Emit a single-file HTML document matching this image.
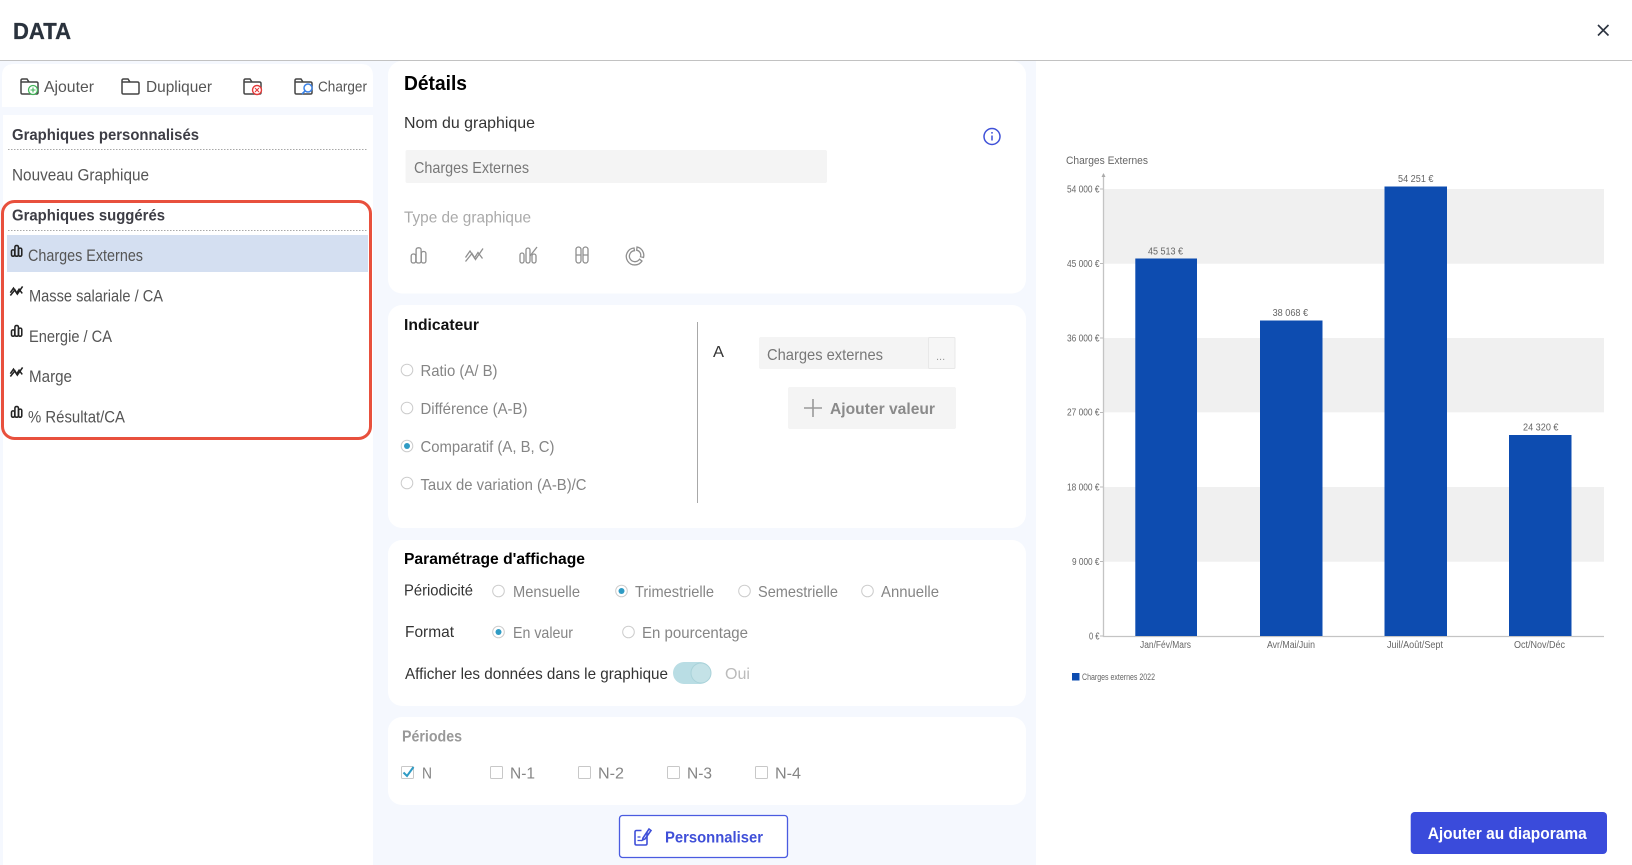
<!DOCTYPE html>
<html lang="fr"><head><meta charset="utf-8"><title>DATA</title>
<style>
html,body{margin:0;padding:0;width:1632px;height:865px;overflow:hidden;background:#fff}
svg{display:block;filter:blur(.3px)}
text{font-family:"Liberation Sans",sans-serif;font-size:16px}
.b{font-weight:700}
.g{fill:#858585}
.c text,text.c{fill:#666;font-size:10px}
</style></head><body>
<svg width="1632" height="865" viewBox="0 0 1632 865" xmlns="http://www.w3.org/2000/svg">
<defs>
<g id="bars" fill="none"><rect x=".7" y="7" width="4.600" height="9" rx="2"/><rect x="5.600" y=".8" width="5" height="15.200" rx="2"/><rect x="10.800" y="4.500" width="4.600" height="11.500" rx="2"/></g>
<g id="lines" fill="none"><path d="M.5 15 7 7l3.500 6L18 2"/><path d="M.5 11 5 4.500l4.500 7L13 6l4.500 6"/></g>
<g id="folder" fill="none" stroke-width="1.500"><path d="M1 4V2.500Q1 1 2.500 1H7l2 3h7.500Q18 4 18 5.500V14.500Q18 16 16.500 16H2.500Q1 16 1 14.500V4H9"/></g>
</defs>

<rect width="1632" height="865" fill="#f5f8fe"/>
<rect width="1632" height="60" fill="#fff"/>
<rect y="60" width="1632" height="1" fill="#c2c2c2"/>
<text class="b" x="13" y="39" style="font-size:23px" fill="#2a323d" stroke="#2a323d" stroke-width=".3" textLength="58" lengthAdjust="spacingAndGlyphs">DATA</text>
<path d="M1598 25l10.500 10.500M1608.500 25L1598 35.500" stroke="#2c3440" stroke-width="1.600" fill="none"/>

<!-- Left column -->
<path d="M2 107V76Q2 64 14 64H361Q373 64 373 76V107Z" fill="#fff"/>
<rect x="3" y="115" width="370" height="750" fill="#fff"/>

<use href="#folder" x="20" y="78" stroke="#444"/>
<circle cx="33" cy="90" r="4.500" fill="#fff" stroke="#43b55a" stroke-width="1.300"/><path d="M30.500 90h5M33 87.500v5" stroke="#43b55a" stroke-width="1.100"/>
<text x="44" y="92" fill="#555" textLength="50" lengthAdjust="spacingAndGlyphs">Ajouter</text>
<use href="#folder" x="121" y="78" stroke="#444"/>
<text x="146" y="92" fill="#555" textLength="66" lengthAdjust="spacingAndGlyphs">Dupliquer</text>
<use href="#folder" x="243" y="78" stroke="#444"/>
<circle cx="257" cy="90" r="4.500" fill="#fff" stroke="#e63a3a" stroke-width="1.400"/><path d="M255 88l4 4M259 88l-4 4" stroke="#e63a3a" stroke-width="1.100"/>
<use href="#folder" x="294" y="78" stroke="#444"/>
<circle cx="308" cy="88" r="4" fill="#fff" stroke="#3b82e6" stroke-width="1.500"/><path d="M305 91l-3 3" stroke="#3b82e6" stroke-width="1.600"/>
<text x="318" y="91.500" fill="#555" style="font-size:15px" textLength="49" lengthAdjust="spacingAndGlyphs">Charger</text>

<text class="b" x="12" y="140" fill="#3d3d45" textLength="187" lengthAdjust="spacingAndGlyphs">Graphiques personnalisés</text>
<line x1="8" y1="149.500" x2="367" y2="149.500" stroke="#a8a8a8" stroke-dasharray="1.500 1.500"/>
<text x="12" y="180.500" fill="#555" style="font-size:16.500px" textLength="137" lengthAdjust="spacingAndGlyphs">Nouveau Graphique</text>

<text class="b" x="12" y="220.700" fill="#3d3d45" textLength="153" lengthAdjust="spacingAndGlyphs">Graphiques suggérés</text>
<line x1="8" y1="230.500" x2="367" y2="230.500" stroke="#a8a8a8" stroke-dasharray="1.500 1.500"/>
<rect x="7" y="235" width="361" height="37" fill="#d4dff1"/>
<g stroke="#222" stroke-width="2.200">
<use href="#bars" transform="translate(11 245) scale(.7)"/>
<use href="#lines" transform="translate(10 285) scale(.7)"/>
<use href="#bars" transform="translate(11 325) scale(.7)"/>
<use href="#lines" transform="translate(10 366) scale(.7)"/>
<use href="#bars" transform="translate(11 406) scale(.7)"/>
</g>
<text x="28" y="261" fill="#555" style="font-size:16.500px" textLength="115" lengthAdjust="spacingAndGlyphs">Charges Externes</text>
<text x="29" y="301.600" fill="#555" style="font-size:16.500px" textLength="134" lengthAdjust="spacingAndGlyphs">Masse salariale / CA</text>
<text x="29" y="341.800" fill="#555" style="font-size:16.500px" textLength="83" lengthAdjust="spacingAndGlyphs">Energie / CA</text>
<text x="29" y="382" fill="#555" style="font-size:16.500px" textLength="43" lengthAdjust="spacingAndGlyphs">Marge</text>
<text x="28" y="422.700" fill="#555" style="font-size:16.500px" textLength="97" lengthAdjust="spacingAndGlyphs">% Résultat/CA</text>
<rect x="2.500" y="201.500" width="368" height="237" rx="12" fill="none" stroke="#e8503d" stroke-width="3"/>

<!-- Details -->
<rect x="388" y="61" width="638" height="232.500" rx="14" fill="#fff"/>
<text class="b" x="404" y="90" fill="#000" style="font-size:20px" textLength="63" lengthAdjust="spacingAndGlyphs">Détails</text>
<text x="404" y="128" fill="#333" textLength="131" lengthAdjust="spacingAndGlyphs">Nom du graphique</text>
<circle cx="992" cy="136.500" r="8" fill="none" stroke="#3f51d8" stroke-width="1.500"/><path d="M992 135.500v5M992 132v1.600" stroke="#3f51d8" stroke-width="1.500"/>
<rect x="405.500" y="150" width="421.500" height="33" rx="2" fill="#f4f4f4"/>
<text x="414" y="173" fill="#777" textLength="115" lengthAdjust="spacingAndGlyphs">Charges Externes</text>
<text x="404" y="222.500" fill="#aaa" textLength="127" lengthAdjust="spacingAndGlyphs">Type de graphique</text>
<g stroke="#8f8f8f" stroke-width="1.300">
<use href="#bars" x="410.500" y="247"/>
<use href="#lines" x="465" y="246.500"/>
</g>
<g fill="none" stroke="#8f8f8f" stroke-width="1.300"><rect x="520" y="253" width="4" height="10" rx="2"/><rect x="526" y="248" width="4" height="15" rx="2"/><rect x="532" y="254" width="4" height="9" rx="2"/><path d="M530 256l7-9"/>
<rect x="576" y="247" width="5" height="16" rx="2.500"/><rect x="583" y="247" width="5" height="16" rx="2.500"/><path d="M576 255h5M583 255h5"/>
<path d="M634 248a8.500 8.500 0 1 0 8 13l-2.500-1.800a5.500 5.500 0 1 1-5-8.500z"/><path d="M637 247a8.500 8.500 0 0 1 6.500 10.500l-3-.8a5 5 0 0 0-3.800-6.500z"/></g>

<!-- Indicateur -->
<rect x="388" y="305" width="638" height="223" rx="14" fill="#fff"/>
<text class="b" x="404" y="330" fill="#111" textLength="75" lengthAdjust="spacingAndGlyphs">Indicateur</text>
<g fill="#fff" stroke="#ccc"><circle cx="407" cy="370" r="5.800"/><circle cx="407" cy="408" r="5.800"/><circle cx="407" cy="446" r="5.800"/><circle cx="407" cy="483" r="5.800"/></g>
<circle cx="407" cy="446" r="3" fill="#2f9bc4"/>
<text class="g" x="420.500" y="376.200" textLength="77" lengthAdjust="spacingAndGlyphs">Ratio (A/ B)</text>
<text class="g" x="420.500" y="414" textLength="107" lengthAdjust="spacingAndGlyphs">Différence (A-B)</text>
<text class="g" x="420.500" y="452" textLength="134" lengthAdjust="spacingAndGlyphs">Comparatif (A, B, C)</text>
<text class="g" x="420.500" y="490" textLength="166" lengthAdjust="spacingAndGlyphs">Taux de variation (A-B)/C</text>
<rect x="697" y="322" width="1" height="181" fill="#a8a8a8"/>
<text x="713" y="357" fill="#333" textLength="11" lengthAdjust="spacingAndGlyphs">A</text>
<rect x="759" y="337" width="196" height="32" rx="2" fill="#f4f4f4"/>
<rect x="928.500" y="337.500" width="26.500" height="31" rx="1" fill="#f6f6f6" stroke="#e8e8e8"/>
<text x="936" y="360" fill="#999" style="font-size:11px">...</text>
<text x="767" y="360" fill="#777" textLength="116" lengthAdjust="spacingAndGlyphs">Charges externes</text>
<rect x="788" y="387" width="168" height="42" rx="2" fill="#f4f4f4"/>
<path d="M813 399v18M804 408h18" stroke="#999" stroke-width="1.600"/>
<text class="b" x="830" y="414" fill="#8a8a8a" textLength="105" lengthAdjust="spacingAndGlyphs">Ajouter valeur</text>

<!-- Parametrage -->
<rect x="388" y="540" width="638" height="166" rx="14" fill="#fff"/>
<text class="b" x="404" y="564" fill="#000" textLength="181" lengthAdjust="spacingAndGlyphs">Paramétrage d'affichage</text>
<text x="404" y="595.500" fill="#333" textLength="69" lengthAdjust="spacingAndGlyphs">Périodicité</text>
<g fill="#fff" stroke="#ccc"><circle cx="498.500" cy="591" r="5.800"/><circle cx="621.500" cy="591" r="5.800"/><circle cx="744.500" cy="591" r="5.800"/><circle cx="867.500" cy="591" r="5.800"/><circle cx="498.500" cy="632" r="5.800"/><circle cx="628.500" cy="632" r="5.800"/></g>
<circle cx="621.500" cy="591" r="3" fill="#2f9bc4"/><circle cx="498.500" cy="632" r="3" fill="#2f9bc4"/>
<text class="g" x="513" y="597" textLength="67" lengthAdjust="spacingAndGlyphs">Mensuelle</text>
<text class="g" x="635" y="597" textLength="79" lengthAdjust="spacingAndGlyphs">Trimestrielle</text>
<text class="g" x="758" y="597" textLength="80" lengthAdjust="spacingAndGlyphs">Semestrielle</text>
<text class="g" x="881" y="597" textLength="58" lengthAdjust="spacingAndGlyphs">Annuelle</text>
<text x="405" y="637" fill="#333" textLength="49" lengthAdjust="spacingAndGlyphs">Format</text>
<text class="g" x="513" y="638" textLength="60" lengthAdjust="spacingAndGlyphs">En valeur</text>
<text class="g" x="642" y="638" textLength="106" lengthAdjust="spacingAndGlyphs">En pourcentage</text>
<text x="405" y="679" fill="#333" textLength="263" lengthAdjust="spacingAndGlyphs">Afficher les données dans le graphique</text>
<rect x="673" y="662" width="38" height="22" rx="11" fill="#b9dde4"/>
<circle cx="701" cy="673" r="10" fill="#c4e2e7" stroke="#a9d2d9"/>
<text x="725" y="679" fill="#bbb" textLength="25" lengthAdjust="spacingAndGlyphs">Oui</text>

<!-- Periodes -->
<rect x="388" y="717" width="638" height="88" rx="14" fill="#fff"/>
<text class="b" x="402" y="741.500" fill="#999" textLength="60" lengthAdjust="spacingAndGlyphs">Périodes</text>
<g fill="#fff" stroke="#c8c8c8"><rect x="401.500" y="766.500" width="12" height="12" rx="1"/><rect x="490.500" y="766.500" width="12" height="12" rx="1"/><rect x="578.500" y="766.500" width="12" height="12" rx="1"/><rect x="667.500" y="766.500" width="12" height="12" rx="1"/><rect x="755.500" y="766.500" width="12" height="12" rx="1"/></g>
<path d="M403.500 772.500l3.500 3.500 6.500-9" fill="none" stroke="#2f9bc4" stroke-width="2"/>
<text class="g" x="422" y="778.500" textLength="10" lengthAdjust="spacingAndGlyphs">N</text>
<text class="g" x="510" y="778.500" textLength="25" lengthAdjust="spacingAndGlyphs">N-1</text>
<text class="g" x="598" y="778.500" textLength="26" lengthAdjust="spacingAndGlyphs">N-2</text>
<text class="g" x="687" y="778.500" textLength="25" lengthAdjust="spacingAndGlyphs">N-3</text>
<text class="g" x="775" y="778.500" textLength="26" lengthAdjust="spacingAndGlyphs">N-4</text>

<rect x="619.500" y="815.500" width="168" height="42" rx="3" fill="#fff" stroke="#4a5be0" stroke-width="1.300"/>
<g fill="none" stroke="#3f4fd8" stroke-width="1.600"><path d="M647 832v11.500q0 1.500-1.500 1.500h-9q-1.500 0-1.500-1.500V832q0-1.500 1.500-1.500h5"/><path d="M643 838l6-9 2 1.500-6 8.500-2.500 1z"/><path d="M637.500 837h3M637.500 840.500h5" stroke-width="1.200"/></g>
<text class="b" x="665" y="842.500" fill="#3f4fd8" textLength="98" lengthAdjust="spacingAndGlyphs">Personnaliser</text>

<!-- Right panel -->
<rect x="1036" y="61" width="596" height="804" fill="#fff"/>
<text class="c" x="1066" y="164" style="font-size:11px" textLength="82" lengthAdjust="spacingAndGlyphs">Charges Externes</text>
<g fill="#f0f0f0"><rect x="1103" y="189" width="501" height="74.700"/><rect x="1103" y="338" width="501" height="74.300"/><rect x="1103" y="487" width="501" height="74.700"/></g>
<path d="M1103.500 174V636.500H1604" fill="none" stroke="#c4c4c4" stroke-width="1.300"/>
<path d="M1101.500 177l2-4 2 4z" fill="#aaa"/>
<g stroke="#bbb"><path d="M1100 189h3M1100 263.500h3M1100 338h3M1100 412.500h3M1100 487h3M1100 561.500h3M1100 636h3"/></g>
<g fill="#0d4cb0"><rect x="1135.300" y="258.500" width="61.700" height="377.500"/><rect x="1260" y="320.500" width="62.500" height="315.500"/><rect x="1384.500" y="186.500" width="62.500" height="449.500"/><rect x="1509" y="435" width="62.500" height="201"/></g>
<g class="c">
<text x="1067" y="192.300" textLength="32.500" lengthAdjust="spacingAndGlyphs">54 000 €</text>
<text x="1067" y="267" textLength="32.500" lengthAdjust="spacingAndGlyphs">45 000 €</text>
<text x="1067" y="341.300" textLength="32.500" lengthAdjust="spacingAndGlyphs">36 000 €</text>
<text x="1067" y="415.700" textLength="32.500" lengthAdjust="spacingAndGlyphs">27 000 €</text>
<text x="1067" y="490.300" textLength="32.500" lengthAdjust="spacingAndGlyphs">18 000 €</text>
<text x="1072" y="565" textLength="27.500" lengthAdjust="spacingAndGlyphs">9 000 €</text>
<text x="1089" y="639.500" textLength="10.500" lengthAdjust="spacingAndGlyphs">0 €</text>
<text x="1148" y="254.700" textLength="35" lengthAdjust="spacingAndGlyphs">45 513 €</text>
<text x="1272.600" y="316" textLength="35.500" lengthAdjust="spacingAndGlyphs">38 068 €</text>
<text x="1398" y="182" textLength="35.500" lengthAdjust="spacingAndGlyphs">54 251 €</text>
<text x="1523" y="430.500" textLength="35.500" lengthAdjust="spacingAndGlyphs">24 320 €</text>
<text x="1140" y="648" textLength="51" lengthAdjust="spacingAndGlyphs">Jan/Fév/Mars</text>
<text x="1267" y="648" textLength="48" lengthAdjust="spacingAndGlyphs">Avr/Mai/Juin</text>
<text x="1387" y="648" textLength="56" lengthAdjust="spacingAndGlyphs">Juil/Août/Sept</text>
<text x="1514" y="648" textLength="51" lengthAdjust="spacingAndGlyphs">Oct/Nov/Déc</text>
<text x="1082" y="680" style="font-size:9px" textLength="73" lengthAdjust="spacingAndGlyphs">Charges externes 2022</text>
</g>
<rect x="1072" y="673" width="7.500" height="7.500" fill="#0d4cb0"/>

<rect x="1410.700" y="812" width="196.300" height="42" rx="4" fill="#3a4bdb"/>
<text class="b" x="1427.700" y="839" fill="#fff" style="font-size:16.500px" textLength="159" lengthAdjust="spacingAndGlyphs">Ajouter au diaporama</text>
</svg>
</body></html>
